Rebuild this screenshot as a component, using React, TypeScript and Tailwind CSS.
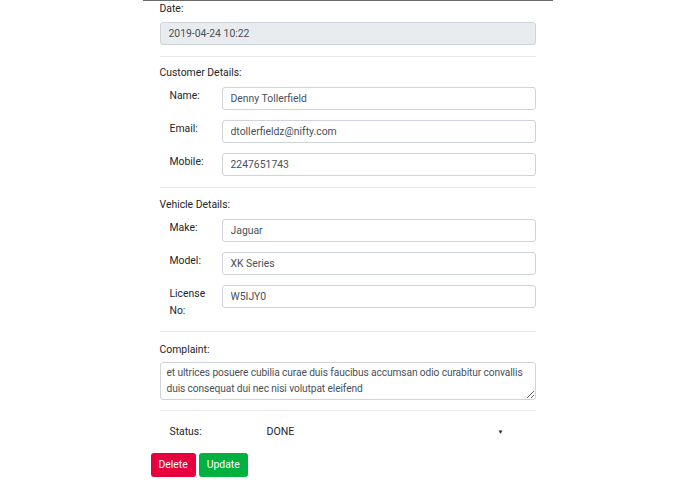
import { useState } from 'react'

type Field = { label: string; value: string }

const customerFields: Field[] = [
  { label: 'Name:', value: 'Denny Tollerfield' },
  { label: 'Email:', value: 'dtollerfieldz@nifty.com' },
  { label: 'Mobile:', value: '2247651743' },
]

const vehicleFields: Field[] = [
  { label: 'Make:', value: 'Jaguar' },
  { label: 'Model:', value: 'XK Series' },
  { label: 'License No:', value: 'W5IJY0' },
]

function FieldRow({ field }: { field: Field }) {
  return (
    <div className="flex items-start">
      <label className="w-[62px] pl-[10px] pr-4 leading-[17px] text-[#212529]">
        {field.label}
      </label>
      <input
        defaultValue={field.value}
        className="flex-1 h-[23px] px-[8px] border border-[#ced4da] rounded-[3px] bg-white text-[#495057] outline-none"
      />
    </div>
  )
}

function Divider({ className }: { className: string }) {
  return <div className={`h-px bg-[#e9e9e9] ${className}`} />
}

export default function App() {
  const [status] = useState('DONE')

  return (
    <div className="min-h-screen bg-white font-['Roboto',sans-serif] text-[10.4px]">
      <div className="mx-auto w-[410px] border-t border-[#6b6b6b]">
        <div className="px-[17px]">
          <div className="leading-[16px] text-[#212529]">Date:</div>
          <input
            readOnly
            defaultValue="2019-04-24 10:22"
            className="mt-[5px] w-full h-[23px] px-[8px] border border-[#ced4da] rounded-[3px] bg-[#e9ecef] text-[#495057] outline-none"
          />
          <Divider className="mt-[11px]" />

          <div className="mt-[8px] leading-[16px] text-[#212529]">Customer Details:</div>
          <div className="mt-[6px] flex flex-col gap-[10px]">
            {customerFields.map((f) => (
              <FieldRow key={f.label} field={f} />
            ))}
          </div>
          <Divider className="mt-[11px]" />

          <div className="mt-[9px] leading-[16px] text-[#212529]">Vehicle Details:</div>
          <div className="mt-[6px] flex flex-col gap-[10px]">
            {vehicleFields.map((f) => (
              <FieldRow key={f.label} field={f} />
            ))}
          </div>
          <Divider className="mt-[12px]" />

          <div className="mt-[10px] leading-[16px] text-[#212529]">Complaint:</div>
          <textarea
            defaultValue="et ultrices posuere cubilia curae duis faucibus accumsan odio curabitur convallis duis consequat dui nec nisi volutpat eleifend"
            className="mt-[4px] block w-full h-[38px] pl-[6px] pr-[2px] py-[2px] text-[10.2px] tracking-[-0.1px] leading-[16px] border border-[#ced4da] rounded-[3px] bg-white text-[#495057] outline-none resize-y overflow-hidden"
          />
          <Divider className="mt-[10px]" />

          <div className="mt-[13px] flex items-center">
            <span className="w-[97px] pl-[10px] leading-[16px] text-[#212529]">Status:</span>
            <div className="flex-1 flex items-center justify-between pr-[32px] pl-[10px] text-[#212529]">
              <span className="text-[10.6px]">{status}</span>
              <span className="text-[6px]">▼</span>
            </div>
          </div>
        </div>

        <div className="mt-[13px] pl-[8px] flex gap-[3px]">
          <button className="h-[24px] px-[8px] rounded-[3px] bg-[#e8003e] text-white">Delete</button>
          <button className="h-[24px] px-[8px] rounded-[3px] bg-[#00b13f] text-white">Update</button>
        </div>
      </div>
    </div>
  )
}
